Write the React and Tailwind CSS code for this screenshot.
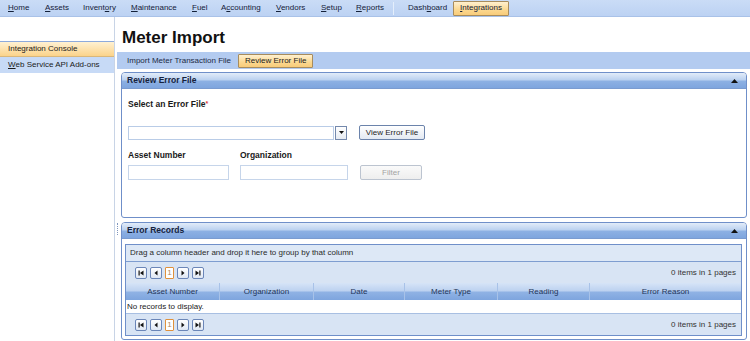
import React from 'react';

const menu = [
  { pre: '', key: 'H', post: 'ome', w: 'w-[37px]' },
  { pre: '', key: 'A', post: 'ssets', w: 'w-[38px]' },
  { pre: 'Invent', key: 'o', post: 'ry', w: 'w-[48px]' },
  { pre: '', key: 'M', post: 'aintenance', w: 'w-[61px]' },
  { pre: '', key: 'F', post: 'uel', w: 'w-[29px]' },
  { pre: 'A', key: 'c', post: 'counting', w: 'w-[55px]' },
  { pre: '', key: 'V', post: 'endors', w: 'w-[45px]' },
  { pre: '', key: 'S', post: 'etup', w: 'w-[35px]' },
  { pre: '', key: 'R', post: 'eports', w: 'w-[37px]' },
];

const columns = [
  { label: 'Asset Number', w: 'w-[94px]' },
  { label: 'Organization', w: 'w-[94px]' },
  { label: 'Date', w: 'w-[91px]' },
  { label: 'Meter Type', w: 'w-[93px]' },
  { label: 'Reading', w: 'w-[92px]' },
  { label: 'Error Reason', w: 'flex-1' },
];

const CollapseArrow = () => (
  <svg width="7" height="4" viewBox="0 0 7 4" className="mr-[8px]">
    <path d="M0 4 L3.5 0 L7 4 Z" fill="#111" />
  </svg>
);

const PanelHeader = ({ title }) => (
  <div className="h-[16px] flex items-center justify-between pl-[5px] bg-[linear-gradient(#e2ecf9_0%,#bcd2f0_45%,#8cb0e3_55%,#7ea5de_100%)] border-b border-[#7a9bd0]">
    <span className="text-[8.5px] font-bold text-[#15223d]">{title}</span>
    <CollapseArrow />
  </div>
);

const PagerButton = ({ type }) => (
  <div className="w-[12px] h-[12px] rounded-[2px] border border-[#6b86b8] bg-[linear-gradient(#ffffff,#dfe7f3)] flex items-center justify-center">
    <svg width="6" height="6" viewBox="0 0 6 6">
      {type === 'first' && (
        <>
          <rect x="0.5" y="0.5" width="1.2" height="5" fill="#111" />
          <path d="M5.5 0.5 L2 3 L5.5 5.5 Z" fill="#111" />
        </>
      )}
      {type === 'prev' && <path d="M4.5 0.5 L1.5 3 L4.5 5.5 Z" fill="#111" />}
      {type === 'next' && <path d="M1.5 0.5 L4.5 3 L1.5 5.5 Z" fill="#111" />}
      {type === 'last' && (
        <>
          <path d="M0.5 0.5 L4 3 L0.5 5.5 Z" fill="#111" />
          <rect x="4.3" y="0.5" width="1.2" height="5" fill="#111" />
        </>
      )}
    </svg>
  </div>
);

const Pager = () => (
  <div className="h-[21px] flex items-center justify-between pl-[9px] pr-[5px] bg-[#d8e4f4]">
    <div className="flex items-center gap-[3px]">
      <PagerButton type="first" />
      <PagerButton type="prev" />
      <div className="w-[9px] h-[12px] rounded-[1px] border border-[#e0913c] bg-white flex items-center justify-center text-[8px] text-[#b08a5a]">
        1
      </div>
      <PagerButton type="next" />
      <PagerButton type="last" />
    </div>
    <span className="text-[8px] text-[#333]">0 items in 1 pages</span>
  </div>
);

const Button = ({ children, disabled, w }) => (
  <div
    className={`${w} h-[15px] rounded-[2px] border flex items-center justify-center text-[8px] ${
      disabled
        ? 'border-[#bcc4d0] bg-[linear-gradient(#fafafa,#eeeeee)] text-[#a3a3a3]'
        : 'border-[#6b83ab] bg-[linear-gradient(#ffffff,#e3e9f2)] text-[#1e1e1e]'
    }`}
  >
    {children}
  </div>
);

export default function App() {
  return (
    <div className="w-[750px] h-[341px] overflow-hidden bg-white font-['Liberation_Sans',Arial,sans-serif] text-[#1a1a1a]">
      {/* Top menu */}
      <div className="h-[17px] flex items-center pl-[8px] bg-[linear-gradient(#cadcf6,#bcd2f3)] border-b border-[#a9c2e8] text-[8px] text-[#14213a]">
        {menu.map((m) => (
          <span key={m.post} className={`${m.w} shrink-0`}>
            {m.pre}
            <span className="underline">{m.key}</span>
            {m.post}
          </span>
        ))}
        <div className="w-[1px] h-[13px] bg-[#9db4d8] border-r border-[#e4eefb] shrink-0" />
        <span className="w-[45px] ml-[14px] shrink-0">
          Dash<span className="underline">b</span>oard
        </span>
        <div className="w-[56px] h-[15px] shrink-0 flex items-center justify-center border border-[#a88c5c] rounded-[1px] bg-[linear-gradient(#fff0cf,#fbd890_60%,#f8cc7a)]">
          <span className="underline">I</span>ntegrations
        </div>
      </div>

      <div className="flex h-[324px]">
        {/* Sidebar */}
        <div className="w-[114px] shrink-0 pt-[24px] text-[8px]">
          <div className="h-[16px] flex items-center pl-[8px] border-t border-[#8eaadb] border-b border-b-[#d9b77a] bg-[linear-gradient(#fff1d2,#fbd38a)]">
            Integration Console
          </div>
          <div className="h-[16px] flex items-center pl-[8px] bg-[#c7daf6]">
            <span className="underline">W</span>eb Service API Add-ons
          </div>
        </div>

        <div className="w-[3px] shrink-0 flex flex-col">
          <div className="w-[1px] h-full bg-[#c8d4e6]" />
        </div>

        {/* Main */}
        <div className="flex-1 flex flex-col">
          <div className="h-[35px] pt-[11px] pl-[5px]">
            <h1 className="text-[17px] leading-[20px] font-bold text-[#111]">Meter Import</h1>
          </div>

          <div className="h-[17px] flex items-center bg-[#b3cbf0] text-[8px]">
            <span className="pl-[10px] pr-[7px] text-[#1c2a44]">Import Meter Transaction File</span>
            <div className="h-[14px] px-[6px] flex items-center border border-[#a88c5c] rounded-[1px] bg-[linear-gradient(#fff0cf,#fbd890_60%,#f8cc7a)]">
              Review Error File
            </div>
          </div>

          <div className="flex">
            <div className="w-[4px] shrink-0 relative">
              <div className="absolute left-0 top-[154px] w-[1px] h-[12px] border-l border-dotted border-[#7f96bd]" />
            </div>
            <div className="flex-1 mr-[3px]">
              {/* Review Error File panel */}
              <div className="mt-[3px] h-[146px] border border-[#6f8fc9] rounded-t-[4px] rounded-b-[3px] overflow-hidden bg-white">
                <PanelHeader title="Review Error File" />
                <div className="pl-[6px]">
                  <div className="mt-[9px] h-[12px] leading-[12px] text-[8.5px] font-bold">
                    Select an Error File<span className="text-[#e04040] text-[7px] align-top">*</span>
                  </div>
                  <div className="mt-[15px] h-[15px] flex items-center">
                    <div className="w-[219px] h-[14px] flex">
                      <div className="flex-1 border border-[#b9cce7] bg-white" />
                      <div className="w-[12px] ml-[1px] border border-[#7489ad] bg-[linear-gradient(#ffffff,#e6ebf2)] flex items-center justify-center">
                        <svg width="5" height="3" viewBox="0 0 5 3">
                          <path d="M0 0 L5 0 L2.5 3 Z" fill="#111" />
                        </svg>
                      </div>
                    </div>
                    <div className="ml-[12px]">
                      <Button w="w-[66px]">View Error File</Button>
                    </div>
                  </div>
                  <div className="mt-[9px] h-[12px] flex items-center text-[8.5px] font-bold">
                    <span className="w-[112px]">Asset Number</span>
                    <span>Organization</span>
                  </div>
                  <div className="mt-[4px] h-[15px] flex items-center">
                    <div className="w-[101px] h-[15px] border border-[#c6d5ea]" />
                    <div className="w-[108px] h-[15px] ml-[11px] border border-[#c6d5ea]" />
                    <div className="ml-[12px]">
                      <Button w="w-[62px]" disabled>
                        Filter
                      </Button>
                    </div>
                  </div>
                </div>
              </div>

              {/* Error Records panel */}
              <div className="mt-[4px] h-[118px] border border-[#6f8fc9] rounded-t-[4px] rounded-b-[3px] overflow-hidden bg-white">
                <PanelHeader title="Error Records" />
                <div className="mt-[5px] ml-[3px] mr-[4px] border border-[#6f8fc9]">
                  <div className="h-[17px] flex items-center pl-[4px] bg-[#dde8f6] border-b border-[#7e9dd0] text-[8px] text-[#2a2a2a]">
                    Drag a column header and drop it here to group by that column
                  </div>
                  <Pager />
                  <div className="h-[17px] flex bg-[linear-gradient(#d6e4f7_0%,#bdd2f0_45%,#8fb2e4_55%,#7ea5de_100%)] text-[8px] text-[#1f3559]">
                    {columns.map((c, i) => (
                      <div
                        key={c.label}
                        className={`${c.w} flex items-center justify-center ${
                          i < columns.length - 1 ? 'border-r border-[#a8c2e8]' : ''
                        }`}
                      >
                        {c.label}
                      </div>
                    ))}
                  </div>
                  <div className="h-[14px] flex items-center pl-[1px] bg-white border-b border-[#a8bfe2] text-[8px]">
                    No records to display.
                  </div>
                  <Pager />
                </div>
              </div>
            </div>
          </div>
        </div>
      </div>
    </div>
  );
}
